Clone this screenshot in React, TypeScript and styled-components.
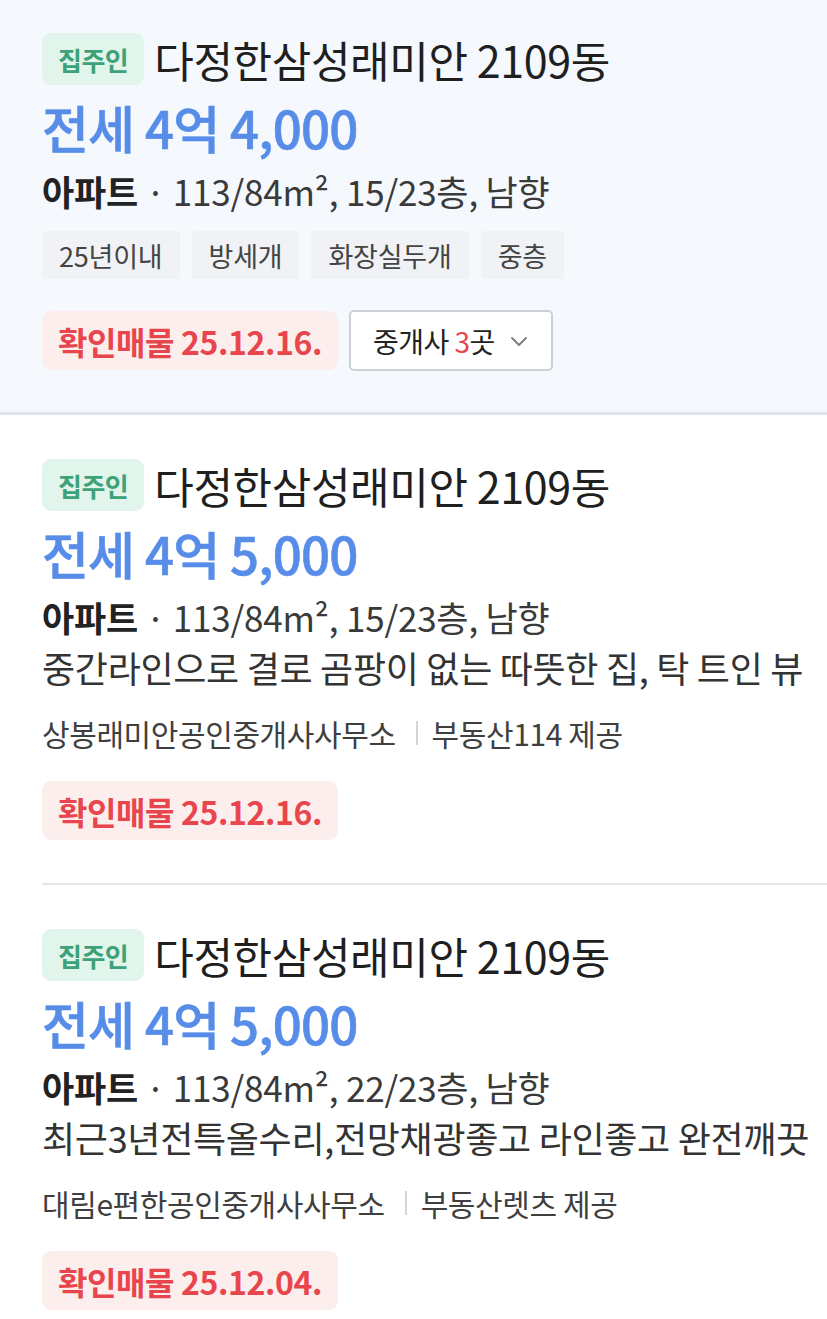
import React from "react";
import styled, { createGlobalStyle, css } from "styled-components";

const GlobalStyle = createGlobalStyle`
  body {
    margin: 0;
    background: #ffffff;
    font-family: "Noto Sans CJK KR", "Noto Sans", sans-serif;
    color: #222222;
  }
`;

const List = styled.ul`
  margin: 0;
  padding: 0;
  list-style: none;
`;

const Item = styled.li<{ $active?: boolean; $last?: boolean }>`
  display: flex;
  flex-direction: column;
  align-items: flex-start;
  ${({ $active, $last }) =>
    $active
      ? css`
          padding: 33px 42px 41px;
          background: #f5f8fd;
          border-bottom: 3px solid #dde5f1;
        `
      : css`
          margin-left: 42px;
          padding: 44px 0 43px;
          border-bottom: ${$last ? "none" : "2px solid #e7e7e7"};
        `}
`;

const TitleRow = styled.div`
  display: flex;
  align-items: center;
  gap: 10px;
`;

const OwnerBadge = styled.span`
  display: inline-flex;
  align-items: center;
  height: 52px;
  padding: 0 16px;
  border-radius: 9px;
  background: #e2f5ec;
  color: #3da277;
  font-size: 26px;
  font-weight: 700;
  letter-spacing: -0.5px;
`;

const Title = styled.h3`
  margin: 0;
  font-size: 43px;
  font-weight: 400;
  letter-spacing: -0.4px;
  color: #1f1f1f;
  line-height: 52px;
`;

const Price = styled.p`
  margin: 14px 0 0;
  font-size: 51px;
  font-weight: 500;
  letter-spacing: -0.8px;
  line-height: 56px;
  color: #578de8;
  -webkit-text-stroke: 0.6px #578de8;
`;

const Spec = styled.p`
  margin: 11px 0 0;
  font-size: 35px;
  line-height: 50px;
  letter-spacing: -0.2px;
  color: #3a3a3a;
  strong {
    font-weight: 700;
    color: #222222;
  }
`;

const Desc = styled.p`
  margin: 0;
  font-size: 36px;
  line-height: 50px;
  letter-spacing: -0.3px;
  color: #333333;
  white-space: nowrap;
`;

const Tags = styled.div`
  display: flex;
  gap: 12px;
  margin-top: 15px;
`;

const Tag = styled.span`
  display: inline-flex;
  align-items: center;
  height: 48px;
  padding: 0 17px;
  border-radius: 3px;
  background: #f0f2f5;
  color: #444444;
  font-size: 27px;
  letter-spacing: -0.2px;
`;

const Agency = styled.p`
  display: flex;
  align-items: center;
  margin: 23px 0 0;
  font-size: 30px;
  line-height: 36px;
  letter-spacing: -0.4px;
  color: #3f3f3f;
`;

const Sep = styled.span`
  width: 2px;
  height: 24px;
  margin: 0 14px 0 20px;
  background: #d5d5d5;
`;

const Footer = styled.div<{ $tight?: boolean }>`
  display: flex;
  align-items: center;
  gap: 11px;
  margin-top: ${({ $tight }) => ($tight ? "31px" : "30px")};
`;

const Verified = styled.span`
  display: inline-flex;
  align-items: center;
  height: 59px;
  padding: 0 16px;
  border-radius: 9px;
  background: #fdeeee;
  color: #e8454c;
  font-size: 32px;
  font-weight: 700;
  letter-spacing: -0.4px;
`;

const BrokerButton = styled.button`
  display: inline-flex;
  align-items: center;
  gap: 12px;
  height: 61px;
  padding: 0 20px 0 22px;
  border: 2px solid #cdd1d7;
  border-radius: 5px;
  background: #ffffff;
  font-family: inherit;
  font-size: 28px;
  letter-spacing: -0.5px;
  color: #222222;
  em {
    font-style: normal;
    color: #e8454c;
  }
`;

const Chevron = () => (
  <svg width="24" height="24" viewBox="0 0 24 24" fill="none">
    <path d="M5 9l7 7 7-7" stroke="#7a7a7a" strokeWidth="1.8" strokeLinecap="round" strokeLinejoin="round" />
  </svg>
);

type Listing = {
  price: string;
  floor: string;
  desc?: string;
  tags?: string[];
  agency?: string;
  provider?: string;
  date: string;
  brokers?: number;
};

const listings: Listing[] = [
  {
    price: "전세 4억 4,000",
    floor: "15/23층",
    tags: ["25년이내", "방세개", "화장실두개", "중층"],
    date: "25.12.16.",
    brokers: 3,
  },
  {
    price: "전세 4억 5,000",
    floor: "15/23층",
    desc: "중간라인으로 결로 곰팡이 없는 따뜻한 집, 탁 트인 뷰",
    agency: "상봉래미안공인중개사사무소",
    provider: "부동산114 제공",
    date: "25.12.16.",
  },
  {
    price: "전세 4억 5,000",
    floor: "22/23층",
    desc: "최근3년전특올수리,전망채광좋고 라인좋고 완전깨끗",
    agency: "대림e편한공인중개사사무소",
    provider: "부동산렛츠 제공",
    date: "25.12.04.",
  },
];

export default function App() {
  return (
    <>
      <GlobalStyle />
      <List>
        {listings.map((l, i) => (
          <Item key={i} $active={i === 0} $last={i === listings.length - 1}>
            <TitleRow>
              <OwnerBadge>집주인</OwnerBadge>
              <Title>다정한삼성래미안 2109동</Title>
            </TitleRow>
            <Price>{l.price}</Price>
            <Spec>
              <strong>아파트</strong> · 113/84m², {l.floor}, 남향
            </Spec>
            {l.desc && <Desc>{l.desc}</Desc>}
            {l.tags && (
              <Tags>
                {l.tags.map((t) => (
                  <Tag key={t}>{t}</Tag>
                ))}
              </Tags>
            )}
            {l.agency && (
              <Agency>
                {l.agency}
                <Sep />
                {l.provider}
              </Agency>
            )}
            <Footer $tight={!!l.tags}>
              <Verified>확인매물 {l.date}</Verified>
              {l.brokers && (
                <BrokerButton>
                  <span>
                    중개사 <em>{l.brokers}</em>곳
                  </span>
                  <Chevron />
                </BrokerButton>
              )}
            </Footer>
          </Item>
        ))}
      </List>
    </>
  );
}
